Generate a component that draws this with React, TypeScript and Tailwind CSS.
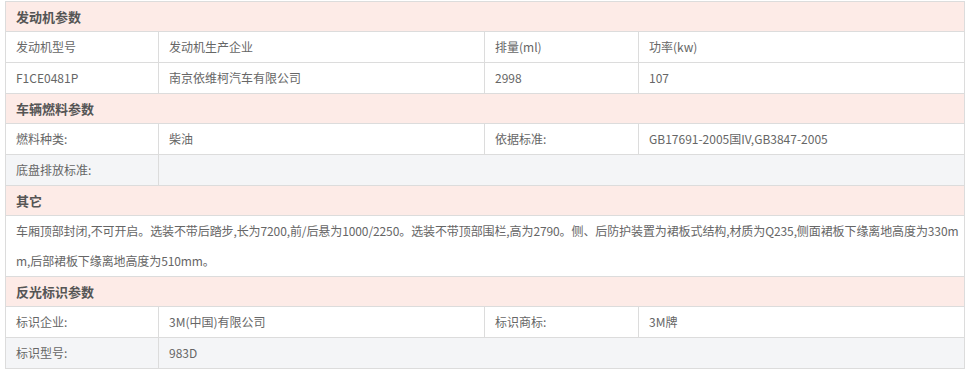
const font = { fontFamily: '"Noto Sans CJK SC", "Liberation Sans", sans-serif' };

function Header({ title }: { title: string }) {
  return (
    <div className="flex h-[30px] items-center border-b border-r border-[#dcdcdc] bg-[#fdebe7] pl-[10px] text-[13px] font-bold text-[#555]">
      {title}
    </div>
  );
}

function Row({ cells, gray = false }: { cells: string[]; gray?: boolean }) {
  const widths = ["w-[153px]", "w-[326px]", "w-[154px]", "w-[326px]"];
  return (
    <div className={`flex h-[31px] border-b border-[#dcdcdc] ${gray ? "bg-[#f4f5f7]" : "bg-white"}`}>
      {cells.map((c, i) => (
        <div
          key={i}
          className={`${widths[i]} flex shrink-0 items-center border-r border-[#dcdcdc] pl-[10px] text-[12px] text-[#666]`}
        >
          {c}
        </div>
      ))}
    </div>
  );
}

function WideRow({ label, value = "", gray = false }: { label: string; value?: string; gray?: boolean }) {
  return (
    <div className={`flex h-[31px] border-b border-[#dcdcdc] ${gray ? "bg-[#f4f5f7]" : "bg-white"}`}>
      <div className="flex w-[153px] shrink-0 items-center border-r border-[#dcdcdc] pl-[10px] text-[12px] text-[#666]">
        {label}
      </div>
      <div className="flex flex-1 items-center border-r border-[#dcdcdc] pl-[10px] text-[12px] text-[#666]">{value}</div>
    </div>
  );
}

export default function App() {
  return (
    <div className="min-h-screen bg-white" style={font}>
      <div className="ml-[5px] mt-[1px] w-[960px] border-l border-t border-[#dcdcdc]">
        <Header title="发动机参数" />
        <Row cells={["发动机型号", "发动机生产企业", "排量(ml)", "功率(kw)"]} />
        <Row cells={["F1CE0481P", "南京依维柯汽车有限公司", "2998", "107"]} />

        <Header title="车辆燃料参数" />
        <Row cells={["燃料种类:", "柴油", "依据标准:", "GB17691-2005国IV,GB3847-2005"]} />
        <WideRow label="底盘排放标准:" gray />

        <Header title="其它" />
        <div className="break-all border-b border-r border-[#dcdcdc] bg-white pl-[10px] pr-0 text-[12px] leading-[30px] tracking-[-0.1px] text-[#666]">
          车厢顶部封闭,不可开启。选装不带后踏步,长为7200,前/后悬为1000/2250。选装不带顶部围栏,高为2790。侧、后防护装置为裙板式结构,材质为Q235,侧面裙板下缘离地高度为330mm,后部裙板下缘离地高度为510mm。
        </div>

        <Header title="反光标识参数" />
        <Row cells={["标识企业:", "3M(中国)有限公司", "标识商标:", "3M牌"]} />
        <WideRow label="标识型号:" value="983D" gray />
      </div>
    </div>
  );
}
